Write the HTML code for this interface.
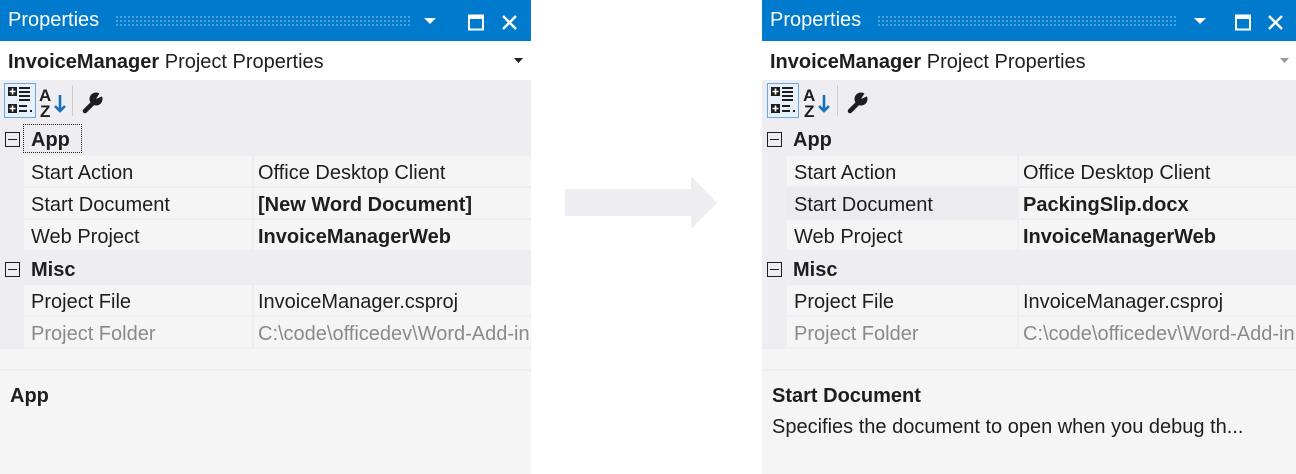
<!DOCTYPE html>
<html><head><meta charset="utf-8">
<style>
*{margin:0;padding:0;box-sizing:border-box}
body{width:1296px;height:474px;background:#fff;position:relative;overflow:hidden;font-family:"Liberation Sans",sans-serif;color:#1e1e1e}
.p{position:absolute;top:0;height:474px;background:#f5f5f5;overflow:hidden}
.tb{position:absolute;left:0;right:0;top:0;height:41px;background:#007acc}
.tb .t{position:absolute;left:8px;top:9px;font-size:20px;color:#fff}
.dots{position:absolute;left:115px;top:15px;height:12px;background-image:radial-gradient(circle,rgba(255,255,255,.35) 0.8px,transparent 1.2px);background-size:4px 4px}
.sub{position:absolute;left:0;right:0;top:41px;height:39px;background:#fff;font-size:20px;padding:10px 0 0 8px;white-space:nowrap}
.sub b{font-weight:bold}
.tool{position:absolute;left:0;right:0;top:80px;height:42px;background:#eeeef2}
.grid{position:absolute;left:0;right:0;top:122px;height:227px;background:#eeeef2}
.cat{position:absolute;left:0;right:0;height:33px;font-size:20px;font-weight:bold}
.cat .box{position:absolute;left:5px;top:10px;width:15px;height:15px;border:1px solid #1e1e1e}
.cat .box:after{content:"";position:absolute;left:2px;right:2px;top:6px;height:1px;background:#1e1e1e}
.cat span{position:absolute;left:31px;top:7px}
.row{position:absolute;right:0;height:30px;font-size:20px;white-space:nowrap}
.row .n,.row .v{position:absolute;top:0;height:30px;background:#f5f5f5;padding:6px 0 0 7px;overflow:hidden}
.row .v{padding-left:4px}
.g{color:#8a8a8a}
.empty{position:absolute;left:0;right:0;top:349px;height:22px;background:#f5f5f5;border-bottom:2px solid #eeeef2}
.desc{position:absolute;left:0;right:0;top:372px;bottom:0;background:#f5f5f5;font-size:20px;padding:13px 0 0 10px}
</style></head><body>

<svg style="position:absolute;left:565px;top:176px" width="152" height="54"><polygon points="0,13 126,13 126,0 152,27 126,53 126,40 0,40" fill="#ededf2"/></svg>

<!-- LEFT -->
<div class="p" style="left:0;width:531px">
 <div class="tb"><div class="t">Properties</div><div class="dots" style="width:295px"></div>
  <svg style="position:absolute;left:424px;top:14px" width="100" height="18">
   <polygon points="0,4 12,4 6,10" fill="#fff"/>
   <rect x="45" y="1.5" width="14" height="14" fill="none" stroke="#fff" stroke-width="2"/><rect x="45" y="1" width="14" height="4" fill="#fff"/>
   <path d="M79 2 L92 15 M92 2 L79 15" stroke="#fff" stroke-width="2.4"/>
  </svg></div>
 <div class="sub"><b>InvoiceManager</b> Project Properties</div>
 <svg style="position:absolute;left:514px;top:58px" width="10" height="6"><polygon points="0,0 9,0 4.5,5" fill="#1e1e1e"/></svg>
 <div class="tool">
  <svg width="120" height="42">
   <rect x="4.5" y="3.5" width="31" height="34" fill="#e8f0fa" stroke="#6aa7e6"/>
   <rect x="8" y="7" width="9" height="9" fill="#1e1e1e"/><path d="M12.5 8.5v6M9.5 11.5h6" stroke="#fff" stroke-width="1.6"/>
   <rect x="8" y="24" width="9" height="9" fill="#1e1e1e"/><path d="M12.5 25.5v6M9.5 28.5h6" stroke="#fff" stroke-width="1.6"/>
   <path d="M19 8h11M19 12h11M19 16h11M19 20h11M19 26h8M19 31h8" stroke="#1e1e1e" stroke-width="2"/><rect x="30" y="30" width="2" height="2" fill="#1e1e1e"/>
   <text x="39" y="21" font-size="17" font-weight="bold" fill="#1e1e1e" font-family="Liberation Sans">A</text>
   <text x="40" y="37" font-size="17" font-weight="bold" fill="#1e1e1e" font-family="Liberation Sans">Z</text>
   <path d="M60 15v16M55 26l5 5 5-5" stroke="#1a70b8" stroke-width="2.6" fill="none"/>
   <rect x="72" y="5" width="1" height="31" fill="#ccc"/>
   <path d="M85 31l8-8" stroke="#1e1e1e" stroke-width="4.5" stroke-linecap="round"/>
   <circle cx="96" cy="19" r="6.5" fill="#1e1e1e"/>
   <path d="M96 19 L101 11 L105 15 Z" fill="#eeeef2"/>
  </svg>
 </div>
 <div class="grid">
  <div class="cat" style="top:0"><div class="box"></div><span>App</span>
   <div style="position:absolute;left:23px;top:2px;width:59px;height:29px;border:1px dotted #1e1e1e"></div></div>
  <div class="row" style="top:34px;left:24px"><div class="n" style="left:0;width:228px">Start Action</div><div class="v" style="left:230px;right:0">Office Desktop Client</div></div>
  <div class="row" style="top:66px;left:24px"><div class="n" style="left:0;width:228px">Start Document</div><div class="v" style="left:230px;right:0;font-weight:bold">[New Word Document]</div></div>
  <div class="row" style="top:98px;left:24px"><div class="n" style="left:0;width:228px">Web Project</div><div class="v" style="left:230px;right:0;font-weight:bold">InvoiceManagerWeb</div></div>
  <div class="cat" style="top:130px"><div class="box"></div><span>Misc</span></div>
  <div class="row" style="top:163px;left:24px"><div class="n" style="left:0;width:228px">Project File</div><div class="v" style="left:230px;right:0">InvoiceManager.csproj</div></div>
  <div class="row g" style="top:195px;left:24px"><div class="n" style="left:0;width:228px">Project Folder</div><div class="v" style="left:230px;right:0">C:\code\officedev\Word-Add-in</div></div>
 </div>
 <div class="empty"></div>
 <div class="desc"><b>App</b></div>
</div>

<!-- RIGHT -->
<div class="p" style="left:762px;width:534px">
 <div class="tb"><div class="t">Properties</div><div class="dots" style="width:300px"></div>
  <svg style="position:absolute;left:432px;top:14px" width="100" height="18">
   <polygon points="0,4 12,4 6,10" fill="#fff"/>
   <rect x="42" y="1.5" width="14" height="14" fill="none" stroke="#fff" stroke-width="2"/><rect x="42" y="1" width="14" height="4" fill="#fff"/>
   <path d="M75 2 L88 15 M88 2 L75 15" stroke="#fff" stroke-width="2.4"/>
  </svg></div>
 <div class="sub"><b>InvoiceManager</b> Project Properties</div>
 <svg style="position:absolute;left:518px;top:58px" width="10" height="6"><polygon points="0,0 9,0 4.5,5" fill="#999"/></svg>
 <div class="tool">
  <svg width="120" height="42">
   <rect x="5.5" y="3.5" width="31" height="34" fill="#e8f0fa" stroke="#6aa7e6"/>
   <rect x="9" y="7" width="9" height="9" fill="#1e1e1e"/><path d="M13.5 8.5v6M10.5 11.5h6" stroke="#fff" stroke-width="1.6"/>
   <rect x="9" y="24" width="9" height="9" fill="#1e1e1e"/><path d="M13.5 25.5v6M10.5 28.5h6" stroke="#fff" stroke-width="1.6"/>
   <path d="M20 8h11M20 12h11M20 16h11M20 20h11M20 26h8M20 31h8" stroke="#1e1e1e" stroke-width="2"/><rect x="31" y="30" width="2" height="2" fill="#1e1e1e"/>
   <text x="41" y="21" font-size="17" font-weight="bold" fill="#1e1e1e" font-family="Liberation Sans">A</text>
   <text x="42" y="37" font-size="17" font-weight="bold" fill="#1e1e1e" font-family="Liberation Sans">Z</text>
   <path d="M62 15v16M57 26l5 5 5-5" stroke="#1a70b8" stroke-width="2.6" fill="none"/>
   <rect x="75" y="5" width="1" height="31" fill="#ccc"/>
   <path d="M88 31l8-8" stroke="#1e1e1e" stroke-width="4.5" stroke-linecap="round"/>
   <circle cx="99" cy="19" r="6.5" fill="#1e1e1e"/>
   <path d="M99 19 L104 11 L108 15 Z" fill="#eeeef2"/>
  </svg>
 </div>
 <div class="grid">
  <div class="cat" style="top:0"><div class="box"></div><span>App</span></div>
  <div class="row" style="top:34px;left:25px"><div class="n" style="left:0;width:230px">Start Action</div><div class="v" style="left:232px;right:0">Office Desktop Client</div></div>
  <div class="row" style="top:66px;left:25px"><div class="n" style="left:0;width:230px;background:#ececf0">Start Document</div><div class="v" style="left:232px;right:0;font-weight:bold">PackingSlip.docx</div></div>
  <div class="row" style="top:98px;left:25px"><div class="n" style="left:0;width:230px">Web Project</div><div class="v" style="left:232px;right:0;font-weight:bold">InvoiceManagerWeb</div></div>
  <div class="cat" style="top:130px"><div class="box"></div><span>Misc</span></div>
  <div class="row" style="top:163px;left:25px"><div class="n" style="left:0;width:230px">Project File</div><div class="v" style="left:232px;right:0">InvoiceManager.csproj</div></div>
  <div class="row g" style="top:195px;left:25px"><div class="n" style="left:0;width:230px">Project Folder</div><div class="v" style="left:232px;right:0">C:\code\officedev\Word-Add-in</div></div>
 </div>
 <div class="empty"></div>
 <div class="desc"><b>Start Document</b><div style="margin-top:8px">Specifies the document to open when you debug th...</div></div>
</div>
</body></html>
